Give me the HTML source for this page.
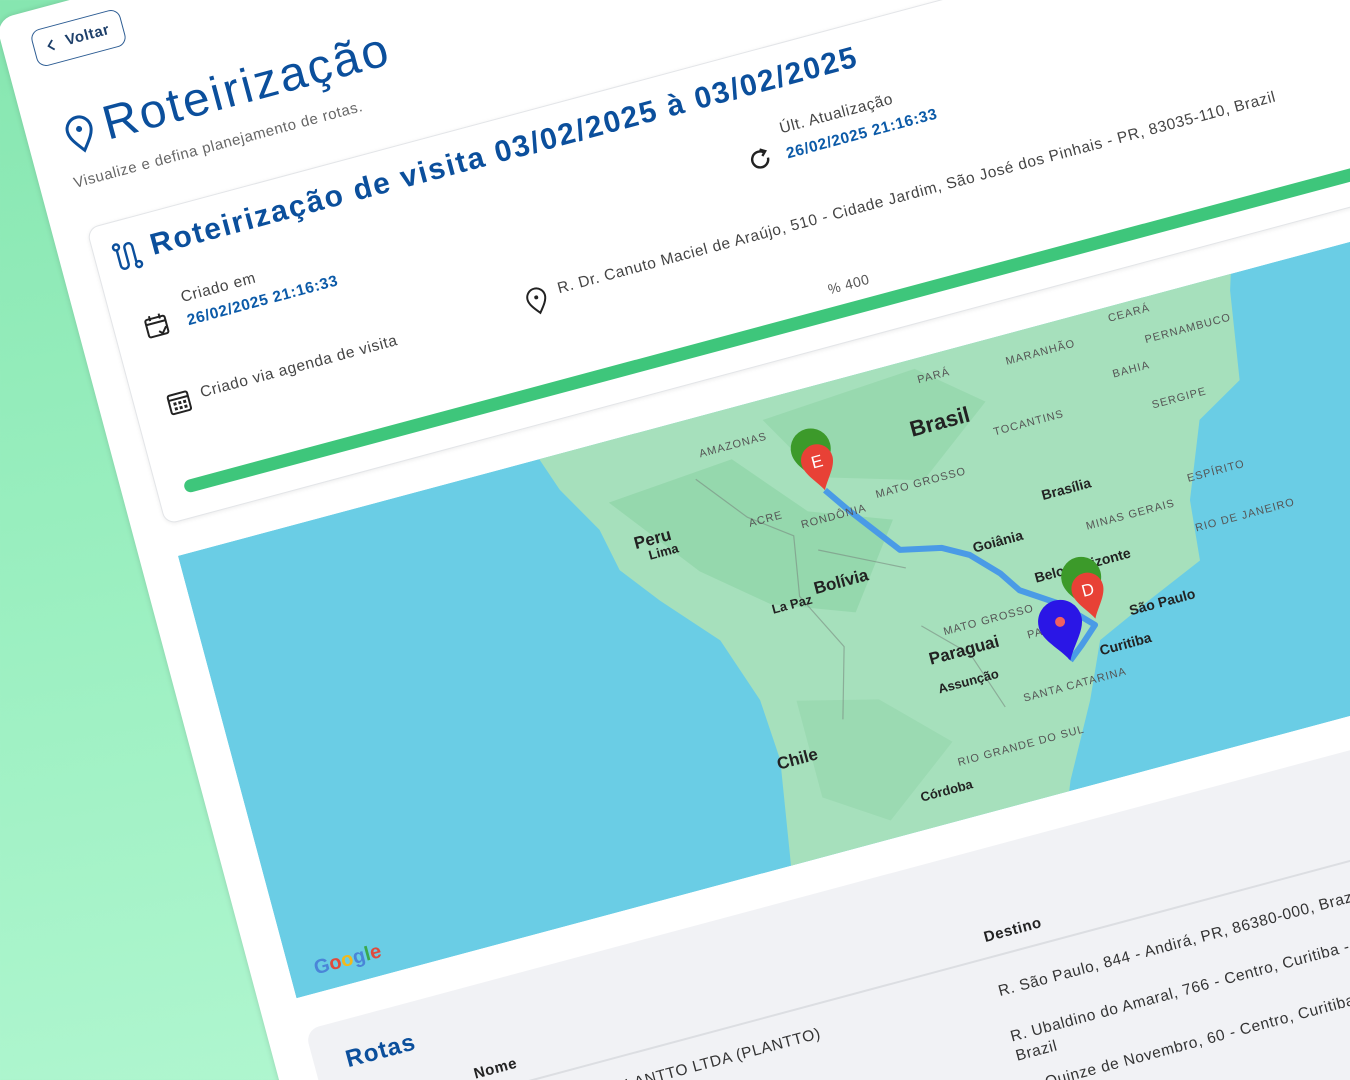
<!DOCTYPE html>
<html><head><meta charset="utf-8"><style>
html,body{margin:0;padding:0;width:1350px;height:1080px;overflow:hidden;}
body{background:linear-gradient(170deg,#86e6b0 0%,#9df0c2 50%,#b6f8d4 100%);font-family:"Liberation Sans",sans-serif;position:relative;}
.page{position:absolute;left:-5px;top:20px;width:1450px;height:1500px;background:#fff;border-radius:18px;transform-origin:0 0;transform:rotate(-15deg);box-shadow:0 0 6px rgba(0,0,0,.15);}
.a{position:absolute;white-space:nowrap;letter-spacing:0.04em;}
.blue{color:#0b4f9c;}
.card{position:absolute;left:34px;top:225px;width:1380px;height:305px;border:1px solid #e3e5e8;border-radius:12px;box-shadow:0 1px 4px rgba(0,0,0,.08);background:#fff;}
.lbl{font-size:15.5px;color:#444;}
.dt{font-size:15.5px;font-weight:bold;color:#0b5aa8;}
.row{font-size:15.5px;color:#333;}
</style></head><body>
<div class="page">
  <div class="a" style="left:30px;top:20px;width:92px;height:38px;border:1.5px solid #2c5c93;border-radius:10px;box-sizing:border-box;font-size:15px;font-weight:bold;color:#1d3f6a;line-height:35px;padding-left:32px;">Voltar</div>
  <svg class="a" style="left:40px;top:31px" width="16" height="16" viewBox="0 0 16 16"><path d="M10 3 L5 8 L10 13" fill="none" stroke="#1d3f6a" stroke-width="1.8"/></svg>
  <svg class="a" style="left:38px;top:112px" width="30" height="40" viewBox="0 0 30 40"><path d="M15 37 C8 28 3 22 3 15 A12 12 0 0 1 27 15 C27 22 22 28 15 37Z" fill="none" stroke="#0b4f9c" stroke-width="3"/><circle cx="15" cy="15" r="3" fill="#0b4f9c"/></svg>
  <div class="a blue" style="left:78px;top:102px;font-size:48px;letter-spacing:0.05em;">Roteirização</div>
  <div class="a" style="left:34px;top:170px;font-size:15px;color:#666;">Visualize e defina planejamento de rotas.</div>

  <div class="card"></div>
  <svg class="a" style="left:52px;top:246px" width="30" height="32" viewBox="0 0 30 32"><circle cx="6" cy="5" r="3" fill="none" stroke="#0b4f9c" stroke-width="2.4"/><circle cx="24" cy="27" r="3" fill="none" stroke="#0b4f9c" stroke-width="2.4"/><path d="M6 8 V24 A4 4 0 0 0 14 24 V8 A4 4 0 0 1 22 8 V24" fill="none" stroke="#0b4f9c" stroke-width="2.4"/></svg>
  <div class="a blue" style="left:92px;top:242px;font-size:30px;font-weight:bold;letter-spacing:0.06em;">Roteirização de visita 03/02/2025 à 03/02/2025</div>

  <svg class="a" style="left:64px;top:324px" width="26" height="26" viewBox="0 0 26 26"><rect x="3" y="5" width="20" height="18" rx="2" fill="none" stroke="#222" stroke-width="2"/><path d="M3 10 H23 M8 2 V7 M18 2 V7 M14 19 l3 3 l5 -6" fill="none" stroke="#222" stroke-width="2"/></svg>
  <div class="a lbl" style="left:108px;top:308px;">Criado em</div>
  <div class="a dt" style="left:108px;top:332px;">26/02/2025 21:16:33</div>

  <svg class="a" style="left:690px;top:320px" width="26" height="26" viewBox="0 0 26 26"><path d="M21 13 A8 8 0 1 1 18 6.5" fill="none" stroke="#222" stroke-width="2.4"/><path d="M15 3 L20 6 L16 10" fill="none" stroke="#222" stroke-width="2.4"/></svg>
  <div class="a lbl" style="left:730px;top:300px;">Últ. Atualização</div>
  <div class="a dt" style="left:730px;top:326px;">26/02/2025 21:16:33</div>

  <svg class="a" style="left:66px;top:404px" width="26" height="26" viewBox="0 0 26 26"><rect x="3" y="4" width="20" height="19" rx="2" fill="none" stroke="#222" stroke-width="2"/><path d="M3 9 H23" stroke="#222" stroke-width="2"/><g fill="#222"><rect x="7" y="12" width="3" height="3"/><rect x="12" y="12" width="3" height="3"/><rect x="17" y="12" width="3" height="3"/><rect x="7" y="17" width="3" height="3"/><rect x="12" y="17" width="3" height="3"/><rect x="17" y="17" width="3" height="3"/></g></svg>
  <div class="a lbl" style="left:102px;top:405px;">Criado via agenda de visita</div>

  <svg class="a" style="left:440px;top:398px" width="22" height="28" viewBox="0 0 22 28"><path d="M11 26 C6 20 2 15 2 10 A9 9 0 0 1 20 10 C20 15 16 20 11 26Z" fill="none" stroke="#222" stroke-width="2"/><circle cx="11" cy="10" r="2" fill="#222"/></svg>
  <div class="a lbl" style="left:474px;top:397px;">R. Dr. Canuto Maciel de Araújo, 510 - Cidade Jardim, São José dos Pinhais - PR, 83035-110, Brazil</div>

  <div class="a" style="left:735px;top:468px;font-size:14px;color:#555;">% 400</div>
  <div class="a" style="left:62px;top:494px;width:1340px;height:13px;border-radius:7px;background:#3ec67b;"></div>

  <svg class="a" style="left:38px;top:565px;letter-spacing:0" width="1262" height="458" viewBox="0 0 1262 458" font-family="Liberation Sans, sans-serif">
    <rect width="1262" height="458" fill="#6acde5"/>
    <path d="M374 0 L386 35 L414 84 L423 128 L454 168 L502 222 L525 290 L529 353 L512 458 L800 458 L804 448 L844 375 L869 320 L927 294 L986 269 L992 208 L1022 133 L1071 105 L1085 16 L1090 0 Z" fill="#a6e0bc"/>
    <path d="M430 60 L560 50 L620 120 L700 150 L640 230 L560 200 L500 150 Z" fill="#8fd4a7" opacity=".7"/>
    <path d="M600 20 L760 10 L820 60 L740 120 L640 90 Z" fill="#93d6aa" opacity=".7"/>
    <path d="M560 300 L640 320 L700 380 L620 440 L560 400 Z" fill="#95d6ab" opacity=".6"/>
    <path d="M520 60 L560 110 L600 140 L590 200 L620 260 L600 330 M700 260 L740 300 L760 360 M620 160 L700 200" fill="none" stroke="#7a8a80" stroke-width="1.2" opacity=".6"/>
    <polyline points="642,104 660,130 699,181 740,190 765,204 790,230 804,251 840,275 868,304 850,320 835,332" fill="none" stroke="#4a9be6" stroke-width="6" stroke-linejoin="round"/>
    <g font-size="17" font-weight="bold" fill="#222">
      <text x="740" y="75" font-size="22">Brasil</text>
      <text x="444" y="112">Peru</text>
      <text x="606" y="202">Bolívia</text>
      <text x="699" y="300">Paraguai</text>
      <text x="525" y="362">Chile</text>
      <text x="905" y="304" font-size="14">São Paulo</text>
      <text x="866" y="335" font-size="14">Curitiba</text>
      <text x="822" y="248" font-size="14">Belo Horizonte</text>
      <text x="770" y="203" font-size="14">Goiânia</text>
      <text x="850" y="170" font-size="14">Brasília</text>
      <text x="455" y="126" font-size="13">Lima</text>
      <text x="560" y="210" font-size="13">La Paz</text>
      <text x="700" y="330" font-size="13">Assunção</text>
      <text x="655" y="430" font-size="13">Córdoba</text>
    </g>
    <g font-size="11" fill="#555" letter-spacing="1">
      <text x="530" y="40">AMAZONAS</text><text x="560" y="120">ACRE</text><text x="610" y="135">RONDÔNIA</text>
      <text x="690" y="125">MATO GROSSO</text><text x="760" y="25">PARÁ</text><text x="850" y="30">MARANHÃO</text>
      <text x="820" y="95">TOCANTINS</text><text x="950" y="70">BAHIA</text><text x="885" y="210">MINAS GERAIS</text>
      <text x="720" y="275">MATO GROSSO</text><text x="800" y="300">PARANÁ</text><text x="780" y="360">SANTA CATARINA</text>
      <text x="700" y="405">RIO GRANDE DO SUL</text><text x="990" y="240">RIO DE JANEIRO</text><text x="995" y="190">ESPÍRITO</text>
      <text x="980" y="110">SERGIPE</text><text x="990" y="45">PERNAMBUCO</text><text x="960" y="15">CEARÁ</text>
    </g>
    <g transform="translate(642,104)"><path d="M0 0 C-6 -12 -20 -22 -20 -36 A20 20 0 0 1 20 -36 C20 -22 6 -12 0 0Z" fill="#3c9a2a" transform="translate(-3,-8)"/><path d="M0 0 C-5 -10 -16 -20 -16 -31 A16 16 0 0 1 16 -31 C16 -20 5 -10 0 0Z" fill="#e84136"/><text x="-6" y="-24" font-size="17" fill="#fff">E</text></g>
    <g transform="translate(870,298)"><path d="M0 0 C-6 -12 -20 -22 -20 -36 A20 20 0 0 1 20 -36 C20 -22 6 -12 0 0Z" fill="#3c9a2a" transform="translate(-3,-8)"/><path d="M0 0 C-5 -10 -16 -20 -16 -31 A16 16 0 0 1 16 -31 C16 -20 5 -10 0 0Z" fill="#e84136"/><text x="-6" y="-24" font-size="17" fill="#fff">D</text></g>
    <g transform="translate(835,332)"><path d="M0 0 C-7 -14 -22 -26 -22 -40 A22 22 0 0 1 22 -40 C22 -26 7 -14 0 0Z" fill="#2a16e6"/><circle cx="0" cy="-40" r="5" fill="#f06060"/></g>
    <text x="25" y="440" font-size="20" font-weight="bold" fill="#4a85d8">G<tspan fill="#e04a3c">o</tspan><tspan fill="#f2b91a">o</tspan>g<tspan fill="#3aa84e">l</tspan><tspan fill="#e04a3c">e</tspan></text>
    <text x="1200" y="450" font-size="11" fill="#555">Atalhos do teclado</text>
  </svg>

  <div class="a" style="left:38px;top:1056px;width:1400px;height:420px;background:#f1f2f5;border-radius:14px;"></div>
  <div class="a blue" style="left:70px;top:1082px;font-size:24px;font-weight:bold;">Rotas</div>
  <div class="a" style="left:190px;top:1134px;font-size:15px;font-weight:bold;color:#222;">Nome</div>
  <div class="a" style="left:718px;top:1134px;font-size:15px;font-weight:bold;color:#222;">Destino</div>
  <div class="a" style="left:170px;top:1162px;width:1260px;height:2px;background:#dcdee2;"></div>
  <div class="a row" style="left:190px;top:1184px;">CLIENTE TESTE PLANTTO LTDA (PLANTTO)</div>
  <div class="a row" style="left:718px;top:1190px;">R. São Paulo, 844 - Andirá, PR, 86380-000, Brazil</div>
  <div class="a row" style="left:190px;top:1236px;">CLIENTE TESTE PLANTTO LTDA (360</div>
  <div class="a row" style="left:718px;top:1236px;line-height:20px;">R. Ubaldino do Amaral, 766 - Centro, Curitiba - PR,<br>Brazil</div>
  <div class="a row" style="left:718px;top:1290px;">R. Quinze de Novembro, 60 - Centro, Curitiba - PR</div>
</div>
</body></html>
